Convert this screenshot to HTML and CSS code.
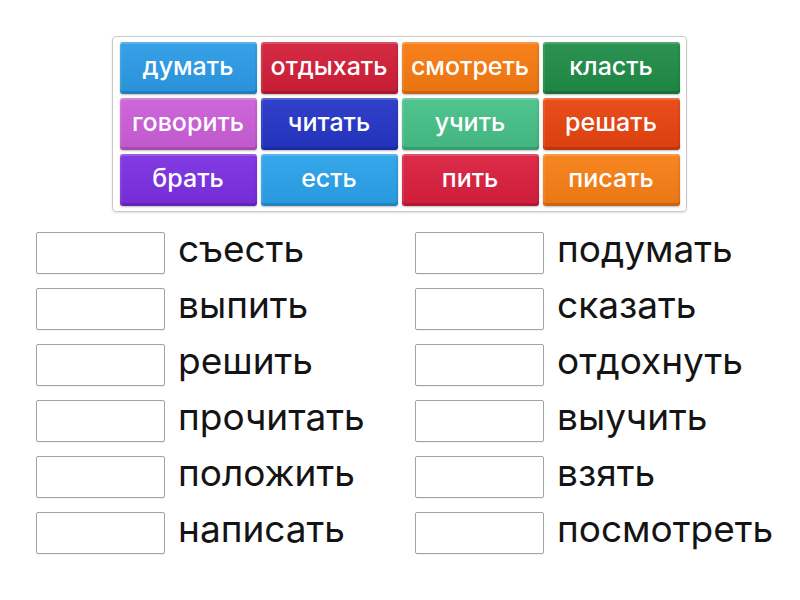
FILE: index.html
```html
<!DOCTYPE html>
<html lang="ru">
<head>
<meta charset="utf-8">
<link rel="stylesheet" href="styles.css">
</head>
<body>
<div class="page">
  <div class="bank">
    <div class="tile c-blue">думать</div>
    <div class="tile c-red">отдыхать</div>
    <div class="tile c-orange">смотреть</div>
    <div class="tile c-green">класть</div>
    <div class="tile c-pink">говорить</div>
    <div class="tile c-navy">читать</div>
    <div class="tile c-mint">учить</div>
    <div class="tile c-rust">решать</div>
    <div class="tile c-purple">брать</div>
    <div class="tile c-sky">есть</div>
    <div class="tile c-crimson">пить</div>
    <div class="tile c-amber">писать</div>
  </div>
  <div class="targets">
    <div class="col">
      <div class="row"><div class="slot"></div><span class="word">съесть</span></div>
      <div class="row"><div class="slot"></div><span class="word">выпить</span></div>
      <div class="row"><div class="slot"></div><span class="word">решить</span></div>
      <div class="row"><div class="slot"></div><span class="word">прочитать</span></div>
      <div class="row"><div class="slot"></div><span class="word">положить</span></div>
      <div class="row"><div class="slot"></div><span class="word">написать</span></div>
    </div>
    <div class="col">
      <div class="row"><div class="slot"></div><span class="word">подумать</span></div>
      <div class="row"><div class="slot"></div><span class="word">сказать</span></div>
      <div class="row"><div class="slot"></div><span class="word">отдохнуть</span></div>
      <div class="row"><div class="slot"></div><span class="word">выучить</span></div>
      <div class="row"><div class="slot"></div><span class="word">взять</span></div>
      <div class="row"><div class="slot"></div><span class="word">посмотреть</span></div>
    </div>
  </div>
</div>
</body>
</html>
```

FILE: styles.css
```css
html, body {
  margin: 0;
  padding: 0;
  background: #ffffff;
}
body {
  font-family: Inter, "Noto Sans", sans-serif;
  width: 800px;
  height: 600px;
  overflow: hidden;
}
.page {
  display: flex;
  flex-direction: column;
  align-items: flex-start;
  padding-top: 36px;
}
.bank {
  margin-left: 112px;
  width: 575px;
  box-sizing: border-box;
  border: 1px solid #c9c9c9;
  border-radius: 4px;
  box-shadow: 0 1px 2px rgba(0,0,0,0.12);
  padding: 5px 6px;
  display: grid;
  grid-template-columns: repeat(4, 137px);
  grid-auto-rows: 52px;
  gap: 4px 4px;
  justify-content: center;
}
.tile {
  display: flex;
  align-items: center;
  justify-content: center;
  color: #ffffff;
  font-size: 25px;
  font-weight: 500;
  border-radius: 3px;
  background-image: linear-gradient(rgba(255,255,255,0.06), rgba(0,0,0,0.06));
  box-shadow: inset 0 2px 0 rgba(255,255,255,0.18), inset 2px 0 0 rgba(255,255,255,0.08), inset -2px 0 0 rgba(0,0,0,0.05), inset 0 -3px 0 rgba(0,0,0,0.14), 0 1px 2px rgba(0,0,0,0.25);
  padding-bottom: 4px;
  box-sizing: border-box;
}
.c-blue { background-color: #2b9be6; }
.c-red { background-color: #d21e38; }
.c-orange { background-color: #f77a10; }
.c-green { background-color: #1f8c47; }
.c-pink { background-color: #cb5ed8; }
.c-navy { background-color: #2535c6; }
.c-mint { background-color: #47c088; }
.c-rust { background-color: #e8430f; }
.c-purple { background-color: #7b2fe2; }
.c-sky { background-color: #2aa2ea; }
.c-crimson { background-color: #da1f3e; }
.c-amber { background-color: #f77e15; }

.targets {
  display: flex;
  margin-left: 36px;
  margin-top: 20px;
}
.col {
  display: flex;
  flex-direction: column;
  gap: 14px;
  width: 379px;
}
.row {
  display: flex;
  align-items: center;
  height: 42px;
}
.slot {
  width: 129px;
  height: 42px;
  box-sizing: border-box;
  border: 1px solid #a3a3a3;
  border-radius: 2px;
  background: #ffffff;
  box-shadow: 0 1px 1px rgba(0,0,0,0.06);
  flex: none;
}
.word {
  margin-left: 13px;
  font-size: 37px;
  color: #141414;
  line-height: 42px;
  white-space: nowrap;
  position: relative;
  top: -4px;
}
```
